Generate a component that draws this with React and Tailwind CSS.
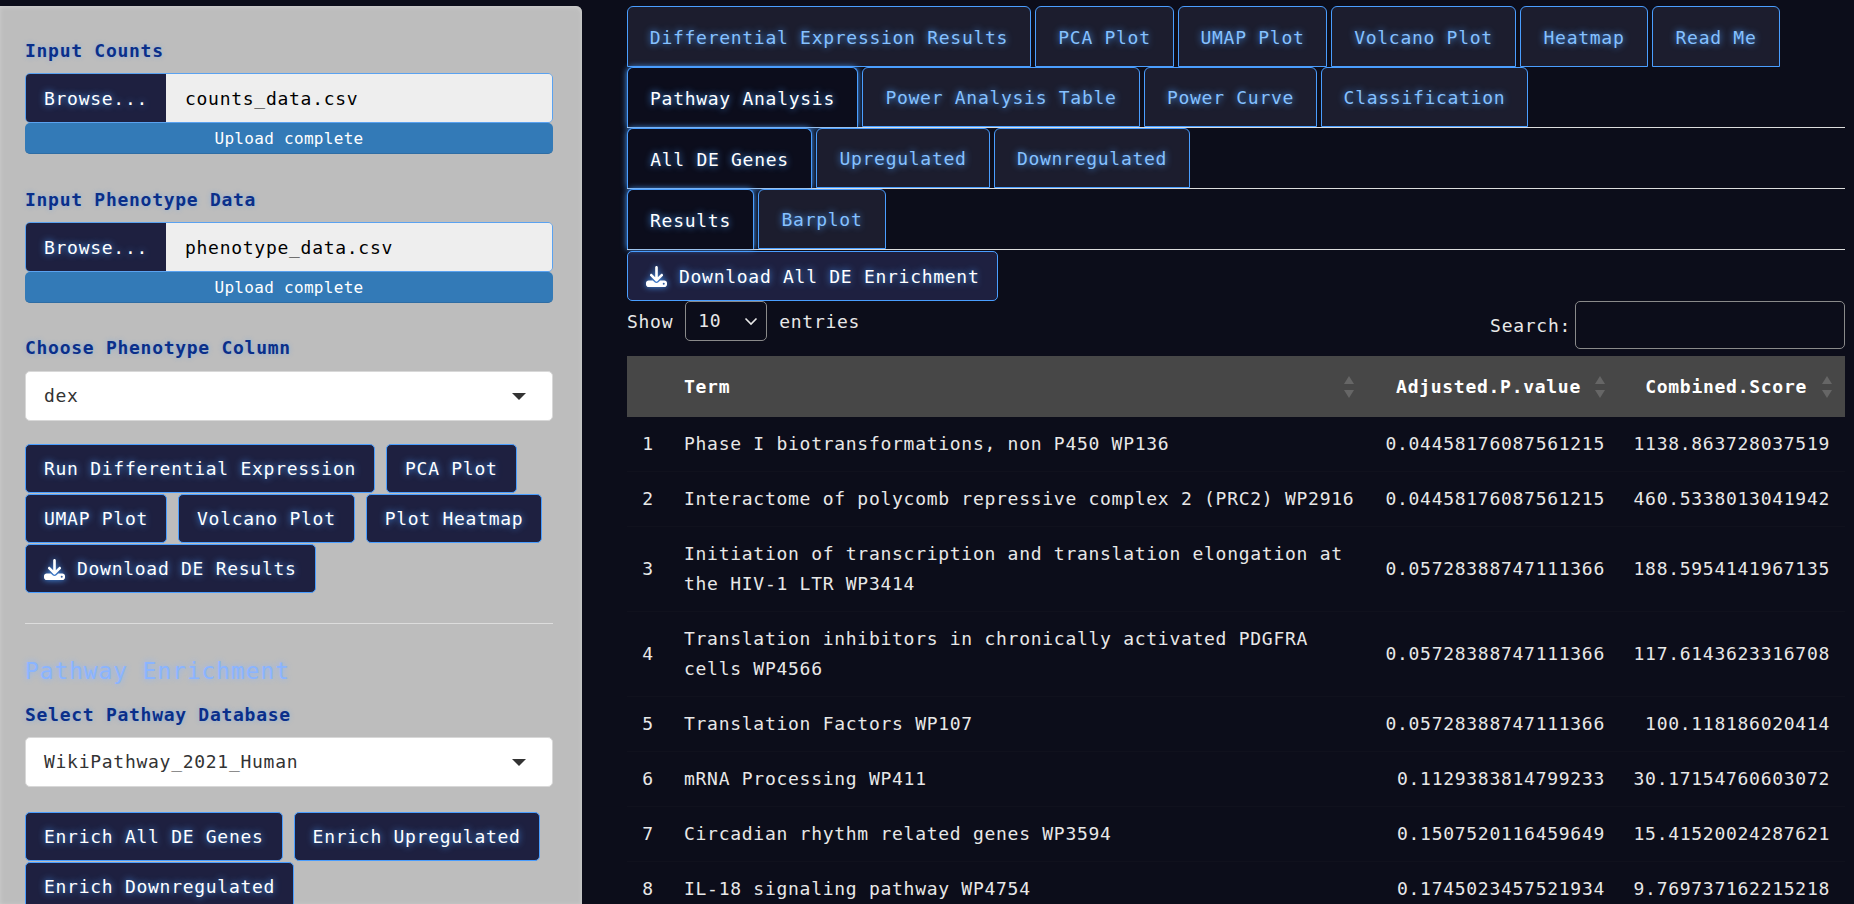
import React from "react";
import { FaDownload } from "react-icons/fa6";

const glowBtn = "[text-shadow:0_0_7px_#4a9eff]";

function Btn({ children, icon, tall }) {
  return (
    <div className={`${tall ? "h-[50px]" : "h-[49px]"} flex items-center gap-[12px] px-[18px] pt-[1px] rounded-[5px] border-[1.5px] border-[#4a9eff] bg-[#1e2040] text-white ${glowBtn}`}>
      {icon && <FaDownload className="w-[21px] h-[21px] drop-shadow-[0_0_3px_#4a9eff]" />}
      <span>{children}</span>
    </div>
  );
}

function Label({ children, className = "" }) {
  return <div className={`h-[30px] flex items-center font-bold text-[#0a2f8a] [text-shadow:0_0_5px_#4a9eff66] ${className}`}>{children}</div>;
}

function FileInput({ name }) {
  return (
    <div>
      <div className="h-[50px] flex rounded-[5px] border-[1.5px] border-[#5aa2f0] overflow-hidden">
        <div className={`w-[140px] pt-[1px] flex items-center justify-center bg-[#1e2040] text-white ${glowBtn}`}>Browse...</div>
        <div className="flex-1 pt-[1px] flex items-center pl-[19px] bg-[#eeeeee] text-black">{name}</div>
      </div>
      <div className="h-[31px] pt-[2px] flex items-center justify-center rounded-[5px] bg-[#337ab7] text-white text-[16px] tracking-[0.3px] border-b border-[#2e6da4]">Upload complete</div>
    </div>
  );
}

function SelectBox({ value }) {
  return (
    <div className="h-[50px] flex items-center justify-between pl-[18px] pr-[26px] rounded-[5px] bg-white border border-[#d8d8d8] text-[#333333]">
      <span>{value}</span>
      <span className="w-0 h-0 border-x-[7px] border-x-transparent border-t-[7px] border-t-[#333333]"></span>
    </div>
  );
}

function Tab({ children, active, w }) {
  return (
    <div
      className={`h-full pt-[2px] flex items-center justify-center rounded-t-[6px] border-[1.5px] border-[#4a9eff] ${w} ${
        active
          ? "bg-[#0c0d1c] text-white border-b-0 [text-shadow:0_0_7px_#4a9eff] shadow-[0_0_6px_#4a9eff]"
          : "bg-[#1c1d2e] text-[#86c1ff] [text-shadow:0_0_7px_#4a9eff]"
      }`}
    >
      {children}
    </div>
  );
}

function TabRow({ children, line }) {
  return (
    <div className={`h-[61px] flex gap-[4px] ${line ? "border-b border-[#dddddd]" : ""}`}>{children}</div>
  );
}

function SortIcon() {
  return (
    <svg viewBox="0 0 10 22" className="w-[10px] h-[22px] fill-[#666666] shrink-0">
      <path d="M5 0 L10 8 H0 Z" />
      <path d="M5 22 L10 14 H0 Z" />
    </svg>
  );
}

const rows = [
  ["1", "Phase I biotransformations, non P450 WP136", "0.04458176087561215", "1138.863728037519"],
  ["2", "Interactome of polycomb repressive complex 2 (PRC2) WP2916", "0.04458176087561215", "460.5338013041942"],
  ["3", "Initiation of transcription and translation elongation at the HIV-1 LTR WP3414", "0.05728388747111366", "188.5954141967135"],
  ["4", "Translation inhibitors in chronically activated PDGFRA cells WP4566", "0.05728388747111366", "117.6143623316708"],
  ["5", "Translation Factors WP107", "0.05728388747111366", "100.118186020414"],
  ["6", "mRNA Processing WP411", "0.1129383814799233", "30.17154760603072"],
  ["7", "Circadian rhythm related genes WP3594", "0.1507520116459649", "15.41520024287621"],
  ["8", "IL-18 signaling pathway WP4754", "0.1745023457521934", "9.769737162215218"],
];

export default function App() {
  return (
    <div className="w-[1854px] h-[904px] overflow-hidden flex bg-[#0c0d1a] font-['DejaVu_Sans_Mono',monospace] text-[18px] tracking-[0.72px] leading-[30px]">
      <aside className="w-[582px] h-[898px] mt-[6px] shrink-0 pl-[25px] pr-[29px] pt-[30px] bg-[#bdbdbd] rounded-tr-[6px] shadow-[inset_0_1px_4px_#cfcfcf]">
        <Label>Input Counts</Label>
        <div className="mt-[7px]"><FileInput name="counts_data.csv" /></div>
        <Label className="mt-[31px]">Input Phenotype Data</Label>
        <div className="mt-[7px]"><FileInput name="phenotype_data.csv" /></div>
        <Label className="mt-[30px]">Choose Phenotype Column</Label>
        <div className="mt-[8px]"><SelectBox value="dex" /></div>
        <div className="mt-[23px] flex flex-wrap gap-x-[11px] gap-y-[1px]">
          <Btn>Run Differential Expression</Btn>
          <Btn>PCA Plot</Btn>
          <Btn>UMAP Plot</Btn>
          <Btn>Volcano Plot</Btn>
          <Btn>Plot Heatmap</Btn>
          <Btn icon>Download DE Results</Btn>
        </div>
        <div className="mt-[30px] border-t border-[#dddddd]"></div>
        <div className="mt-[30px] h-[34px] flex items-center text-[23px] tracking-[0.87px] text-[#8ab4ff] [text-shadow:0_0_6px_#8ab4ff]">Pathway Enrichment</div>
        <Label className="mt-[12px]">Select Pathway Database</Label>
        <div className="mt-[7px]"><SelectBox value="WikiPathway_2021_Human" /></div>
        <div className="mt-[25px] flex flex-wrap gap-x-[11px] gap-y-[1px]">
          <Btn>Enrich All DE Genes</Btn>
          <Btn>Enrich Upregulated</Btn>
          <Btn>Enrich Downregulated</Btn>
        </div>
      </aside>

      <main className="ml-[45px] w-[1218px] pt-[6px] text-[#e8e8e8]">
        <TabRow>
          <Tab w="w-[404px]">Differential Expression Results</Tab>
          <Tab w="w-[139px]">PCA Plot</Tab>
          <Tab w="w-[149px]">UMAP Plot</Tab>
          <Tab w="w-[185px]">Volcano Plot</Tab>
          <Tab w="w-[128px]">Heatmap</Tab>
          <Tab w="w-[128px]">Read Me</Tab>
        </TabRow>
        <TabRow line>
          <Tab w="w-[231px]" active>Pathway Analysis</Tab>
          <Tab w="w-[278px]">Power Analysis Table</Tab>
          <Tab w="w-[173px]">Power Curve</Tab>
          <Tab w="w-[207px]">Classification</Tab>
        </TabRow>
        <TabRow line>
          <Tab w="w-[185px]" active>All DE Genes</Tab>
          <Tab w="w-[174px]">Upregulated</Tab>
          <Tab w="w-[196px]">Downregulated</Tab>
        </TabRow>
        <TabRow line>
          <Tab w="w-[127px]" active>Results</Tab>
          <Tab w="w-[128px]">Barplot</Tab>
        </TabRow>
        <div className="mt-[1px] w-fit"><Btn icon tall>Download All DE Enrichment</Btn></div>

        <div className="h-[55px] flex justify-between items-start">
          <div className="flex items-center gap-[12px] h-[40px]">
            <span className="pt-[1px]">Show</span>
            <div className="w-[82px] h-[40px] flex items-center justify-between pl-[12px] pr-[7px] rounded-[5px] border border-[#8a8a8a]">
              <span>10</span>
              <svg viewBox="0 0 16 16" className="w-[16px] h-[16px] fill-none stroke-[#e8e8e8] stroke-[1.6]"><path d="M2.5 5.5 L8 11 L13.5 5.5" /></svg>
            </div>
            <span className="pt-[1px]">entries</span>
          </div>
          <div className="flex items-center gap-[4px]">
            <span className="pt-[2px]">Search:</span>
            <div className="w-[270px] h-[48px] rounded-[5px] border border-[#8a8a8a]"></div>
          </div>
        </div>

        <table className="w-[1218px] table-fixed border-collapse">
          <colgroup>
            <col className="w-[42px]" />
            <col className="w-[704px]" />
            <col className="w-[245px]" />
            <col className="w-[227px]" />
          </colgroup>
          <thead>
            <tr className="h-[61px] bg-[#474747] text-white font-bold">
              <th></th>
              <th className="pl-[15px] pr-[19px]">
                <div className="flex items-center justify-between font-bold"><span>Term</span><SortIcon /></div>
              </th>
              <th className="pr-[13px]">
                <div className="flex items-center justify-end gap-[14px] font-bold"><span>Adjusted.P.value</span><SortIcon /></div>
              </th>
              <th className="pr-[13px]">
                <div className="flex items-center justify-end gap-[15px] font-bold"><span>Combined.Score</span><SortIcon /></div>
              </th>
            </tr>
          </thead>
          <tbody>
            {rows.map((r) => (
              <tr key={r[0]} className="border-b border-[#10111d]">
                <td className="py-[12px] text-center align-middle">{r[0]}</td>
                <td className="py-[12px] pl-[15px] pr-[10px] align-middle">{r[1]}</td>
                <td className="py-[12px] pr-[13px] text-right align-middle">{r[2]}</td>
                <td className="py-[12px] pr-[15px] text-right align-middle">{r[3]}</td>
              </tr>
            ))}
          </tbody>
        </table>
      </main>
    </div>
  );
}
